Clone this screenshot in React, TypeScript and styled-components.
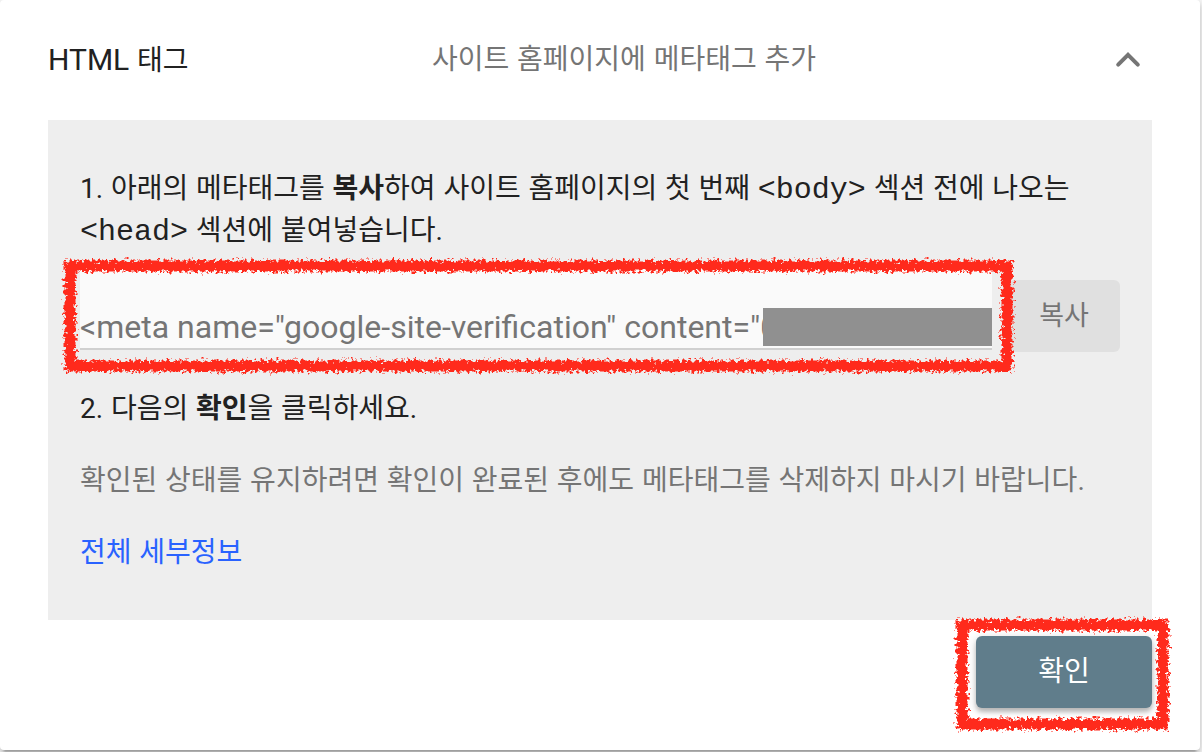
import React, { useId } from 'react';
import styled, { createGlobalStyle } from 'styled-components';

const GlobalStyle = createGlobalStyle`
  *, *::before, *::after { box-sizing: border-box; }
  body {
    margin: 0;
    background: #f5f5f5;
    color: #212121;
    font-family: "Liberation Sans", "Noto Sans CJK KR", sans-serif;
    font-size: 28px;
    line-height: 42px;
  }
  button, input { font: inherit; }
`;

const Card = styled.main`
  margin: 0 2px 2px 0;
  padding: 0 48px 42px;
  border-radius: 4px;
  background: #fff;
  box-shadow: 0 4px 4px rgba(0, 0, 0, 0.14), 0 6px 2px -4px rgba(0, 0, 0, 0.2),
    0 2px 10px rgba(0, 0, 0, 0.12);
`;

const Header = styled.header`
  display: grid;
  grid-template-columns: 384px 1fr auto;
  align-items: center;
  height: 120px;
`;

const Title = styled.h2`
  margin: 0;
  font-size: 28px;
  font-weight: 400;
`;

const Latin = styled.span<{ $large?: boolean }>`
  font-family: Roboto, sans-serif;
  font-size: ${(p) => (p.$large ? '30px' : 'inherit')};
`;

const Text = styled.p<{ $muted?: boolean }>`
  margin: 0;
  color: ${(p) => (p.$muted ? '#757575' : 'inherit')};
`;

const ToggleButton = styled.button`
  display: flex;
  padding: 0;
  border: 0;
  background: none;
  color: #757575;
  cursor: pointer;
`;

const Panel = styled.section`
  display: flex;
  flex-direction: column;
  gap: 30px;
  padding: 48px 32px 46px;
  background: #eee;
`;

const Step = styled.div`
  display: flex;
  flex-direction: column;
  gap: 12px;
  margin-bottom: 6px;
`;

const Code = styled.code`
  font-family: "Liberation Mono", monospace;
  font-size: 30px;
  line-height: 1;
`;

const CopyRow = styled.div`
  display: flex;
  gap: 16px;
  height: 88px;
`;

const Field = styled.div`
  position: relative;
  flex: 1;
  height: 86px;
`;

const TagInput = styled.input`
  width: 100%;
  height: 100%;
  padding: 42px 0 0;
  border: 0;
  border-bottom: 2px solid #d0d0d0;
  border-radius: 0;
  outline: 0;
  background: #fafafa;
  color: #757575;
  font-family: Roboto, sans-serif;
  font-size: 32px;
`;

const Redaction = styled.span`
  position: absolute;
  right: 0;
  bottom: 4px;
  width: 229px;
  height: 38px;
  background: #909090;
`;

const CopyButton = styled.button`
  align-self: flex-end;
  width: 112px;
  height: 72px;
  padding: 0;
  border: 0;
  border-radius: 6px;
  background: #e0e0e0;
  color: #757575;
  font-size: 27px;
  cursor: pointer;
`;

const DetailsLink = styled.a`
  align-self: flex-start;
  color: #2962ff;
  text-decoration: none;
`;

const Actions = styled.footer`
  display: flex;
  justify-content: flex-end;
  padding-top: 16px;
`;

const ConfirmWrap = styled.div`
  position: relative;
`;

const ConfirmButton = styled.button`
  width: 176px;
  height: 72px;
  padding: 0;
  border: 0;
  border-radius: 6px;
  background: #607d8b;
  color: #fff;
  box-shadow: 0 4px 4px rgba(0, 0, 0, 0.2), 0 2px 10px rgba(0, 0, 0, 0.16);
  cursor: pointer;
`;

const MarkerArea = styled.div<{ $inset: string }>`
  position: absolute;
  inset: ${(p) => p.$inset};
  pointer-events: none;
`;

const MarkerSvg = styled.svg`
  display: block;
  width: 100%;
  height: 100%;
  overflow: visible;
`;

/* Hand-drawn crayon frame around whatever it is placed over. */
function CrayonFrame({ inset }: { inset: string }) {
  const id = useId().replace(/[^a-zA-Z0-9]/g, '');
  return (
    <MarkerArea $inset={inset}>
      <MarkerSvg aria-hidden="true">
        <defs>
          <filter id={id} filterUnits="userSpaceOnUse" x="-20" y="-20" width="1400" height="300" colorInterpolationFilters="sRGB">
            <feTurbulence type="fractalNoise" baseFrequency="0.32" numOctaves="3" seed="7" result="noise" />
            <feDisplacementMap in="SourceGraphic" in2="noise" scale="11" xChannelSelector="R" yChannelSelector="G" />
          </filter>
        </defs>
        <rect width="100%" height="100%" fill="none" stroke="#ff2a1c" strokeWidth="11" filter={`url(#${id})`} />
      </MarkerSvg>
    </MarkerArea>
  );
}

export default function App() {
  return (
    <>
      <GlobalStyle />
      <Card>
        <Header>
          <Title><Latin $large>HTML</Latin> 태그</Title>
          <Text $muted>사이트 홈페이지에 메타태그 추가</Text>
          <ToggleButton type="button" aria-label="접기" aria-expanded="true">
            <svg width="48" height="48" viewBox="0 0 48 48" fill="none" stroke="currentColor" strokeWidth="4" strokeLinecap="round">
              <path d="M14.2 28.6 24 18.9l9.8 9.7" />
            </svg>
          </ToggleButton>
        </Header>
        <Panel>
          <Step>
            <Text>
              <Latin>1.</Latin> 아래의 메타태그를 <b>복사</b>하여 사이트 홈페이지의 첫 번째 <Code>&lt;body&gt;</Code> 섹션 전에 나오는{' '}
              <Code>&lt;head&gt;</Code> 섹션에 붙여넣습니다<Latin>.</Latin>
            </Text>
            <CopyRow>
              <Field>
                <TagInput
                  readOnly
                  aria-label="메타태그"
                  value={'<meta name="google-site-verification" content="0'}
                />
                <Redaction />
                <CrayonFrame inset="2px -15px -16px -10px" />
              </Field>
              <CopyButton type="button">복사</CopyButton>
            </CopyRow>
          </Step>
          <Text><Latin>2.</Latin> 다음의 <b>확인</b>을 클릭하세요<Latin>.</Latin></Text>
          <Text $muted>확인된 상태를 유지하려면 확인이 완료된 후에도 메타태그를 삭제하지 마시기 바랍니다<Latin>.</Latin></Text>
          <DetailsLink href="#details">전체 세부정보</DetailsLink>
        </Panel>
        <Actions>
          <ConfirmWrap>
            <ConfirmButton type="button">확인</ConfirmButton>
            <CrayonFrame inset="-11px -11px -16px -14px" />
          </ConfirmWrap>
        </Actions>
      </Card>
    </>
  );
}
